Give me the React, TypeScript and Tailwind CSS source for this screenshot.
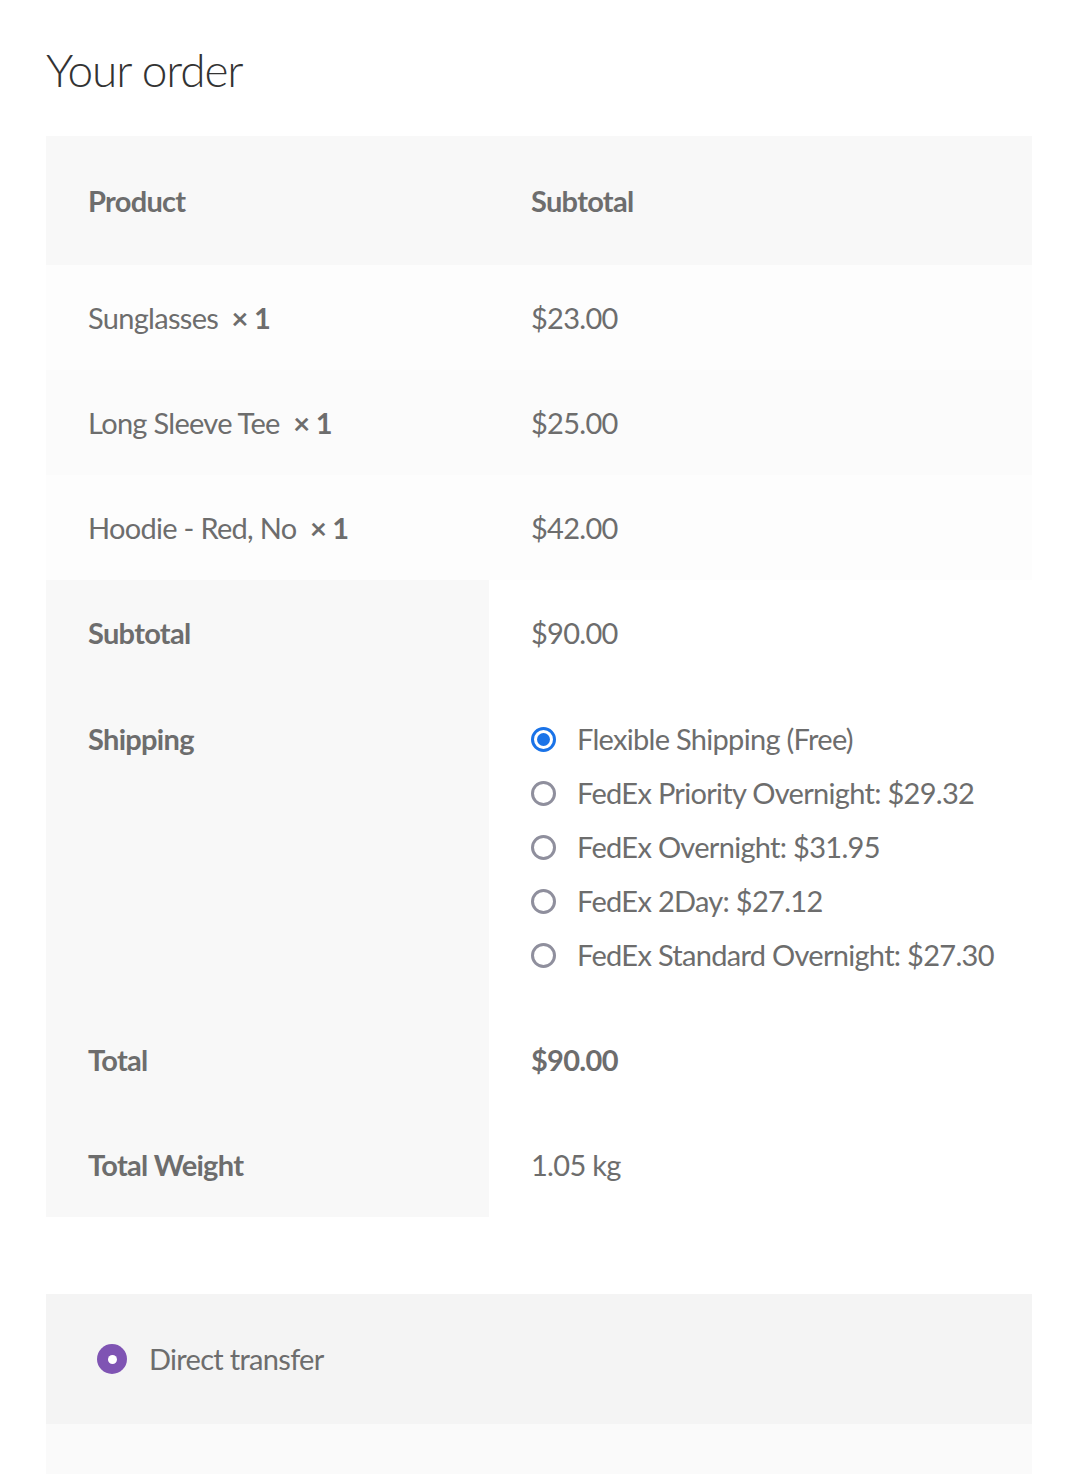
import React from 'react';

const items = [
  { name: 'Sunglasses', qty: 1, price: '$23.00', bg: 'bg-[#fdfdfd]' },
  { name: 'Long Sleeve Tee', qty: 1, price: '$25.00', bg: 'bg-[#fbfbfb]' },
  { name: 'Hoodie - Red, No', qty: 1, price: '$42.00', bg: 'bg-[#fdfdfd]' },
];

const shipping = [
  'Flexible Shipping (Free)',
  'FedEx Priority Overnight: $29.32',
  'FedEx Overnight: $31.95',
  'FedEx 2Day: $27.12',
  'FedEx Standard Overnight: $27.30',
];

function Radio({ checked }: { checked?: boolean }) {
  if (checked) {
    return (
      <span className="flex h-[25px] w-[25px] shrink-0 items-center justify-center rounded-full border-[3px] border-[#1a73e8] bg-white">
        <span className="h-[13px] w-[13px] rounded-full bg-[#1a73e8]" />
      </span>
    );
  }
  return <span className="h-[25px] w-[25px] shrink-0 rounded-full border-[3px] border-[#8f8f9d] bg-white" />;
}

function SplitRow({ label, children, className = 'h-[105px] items-center' }: { label: string; children: React.ReactNode; className?: string }) {
  return (
    <div className="flex">
      <div className={`flex w-[443px] shrink-0 bg-[#f8f8f8] pl-[42px] font-bold ${className}`}>{label}</div>
      <div className={`flex flex-1 bg-white pl-[42px] ${className}`}>{children}</div>
    </div>
  );
}

export default function App() {
  return (
    <div className="min-h-[1474px] bg-white px-[46px] pt-[40px] text-[29px] tracking-[-0.7px] text-[#6d6d6d]" style={{ fontFamily: 'Lato, "Open Sans", sans-serif' }}>
      <h2 className="h-[96px] text-[46px] font-light leading-[60px] tracking-[-1.1px] text-[#333333]">Your order</h2>

      <div className="w-[986px]">
        <div className="flex h-[129px] items-center bg-[#f8f8f8] font-bold">
          <div className="w-[443px] pl-[42px]">Product</div>
          <div className="pl-[42px]">Subtotal</div>
        </div>

        {items.map((it) => (
          <div key={it.name} className={`flex h-[105px] items-center ${it.bg}`}>
            <div className="w-[443px] pl-[42px]">
              {it.name}&nbsp; <span className="font-bold">× {it.qty}</span>
            </div>
            <div className="pl-[42px]">{it.price}</div>
          </div>
        ))}

        <SplitRow label="Subtotal">$90.00</SplitRow>

        <SplitRow label="Shipping" className="items-start pb-[25px] pt-[27px] leading-[54px]">
          <ul className="flex flex-col">
            {shipping.map((s, i) => (
              <li key={s} className="flex h-[54px] items-center gap-[21px]">
                <Radio checked={i === 0} />
                <span>{s}</span>
              </li>
            ))}
          </ul>
        </SplitRow>

        <SplitRow label="Total">
          <span className="font-bold">$90.00</span>
        </SplitRow>

        <SplitRow label="Total Weight">1.05 kg</SplitRow>
      </div>

      <div className="mt-[77px] w-[986px]">
        <div className="flex h-[130px] items-center gap-[22px] bg-[#f4f4f4] pl-[51px]">
          <span className="flex h-[30px] w-[30px] items-center justify-center rounded-full bg-[#7f54b3]">
            <span className="h-[9px] w-[9px] rounded-full bg-white" />
          </span>
          <span>Direct transfer</span>
        </div>
        <div className="h-[50px] bg-[#fafafa]" />
      </div>
    </div>
  );
}
